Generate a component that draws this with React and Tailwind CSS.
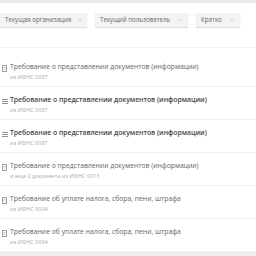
import { ChevronDown } from 'lucide-react';

const items = [
    { title: 'Требование о представлении документов (информации)', sub: 'из ИФНС 0087', unread: false },
    { title: 'Требование о представлении документов (информации)', sub: 'из ИФНС 0087', unread: true },
    { title: 'Требование о представлении документов (информации)', sub: 'из ИФНС 0087', unread: true },
    { title: 'Требование о представлении документов (информации)', sub: 'и еще 2 документа из ИФНС 0013', unread: false },
    { title: 'Требование об уплате налога, сбора, пени, штрафа', sub: 'из ИФНС 0004', unread: false },
    { title: 'Требование об уплате налога, сбора, пени, штрафа', sub: 'из ИФНС 0004', unread: false },
];

function DocIcon() {
    return (
        <svg width="5" height="7" viewBox="0 0 5 7" className="shrink-0">
            <rect x="0.5" y="0.5" width="4" height="6" fill="#fff" stroke="#a0a0a0" />
            <path d="M1.5 2.5h2M1.5 4h2" stroke="#b8b8b8" strokeWidth="0.8" />
        </svg>
    );
}

function StackIcon() {
    return (
        <svg width="6" height="6" viewBox="0 0 6 6" className="shrink-0">
            <path d="M0 1.5h6M0 3.5h6M0 5.5h6" stroke="#888" strokeWidth="0.9" />
        </svg>
    );
}

function Filter({ label, width }) {
    return (
        <button className={`flex items-center gap-[7px] shrink-0 whitespace-nowrap h-[14px] pl-[5px] bg-[#f3f3f3] shadow-[0_1px_1px_rgba(0,0,0,0.12)] text-[6.2px] leading-none text-[#666] ${width}`}>
            <span>{label}</span>
            <ChevronDown size={5} strokeWidth={2.5} className="text-[#999] shrink-0" />
        </button>
    );
}

export default function App() {
    return (
        <div className="w-[256px] h-[256px] bg-white overflow-hidden flex flex-col" style={{ fontFamily: '"Open Sans", "Noto Sans", sans-serif' }}>
            <div className="h-[3px] bg-[#ececec] shrink-0" />

            {/* Filters */}
            <div className="flex items-start gap-[8px] h-[45px] pt-[10px] border-b border-[#f0f0f0] shrink-0">
                <Filter label="Текущая организация" width="w-[87px]" />
                <Filter label="Текущий пользователь" width="w-[93px]" />
                <Filter label="Кратко" width="w-[44px]" />
            </div>

            {/* List */}
            <div className="flex flex-col pt-[6px]">
                {items.map((item, i) => (
                    <div key={i} className="flex gap-[3px] pl-[2px] h-[33px] pt-[10px] border-b border-[#efefef] shrink-0">
                        <div className="pt-[1px] w-[5px]">
                            {item.unread ? <StackIcon /> : <DocIcon />}
                        </div>
                        <div className="flex flex-col leading-none">
                            <div className={`text-[6.8px] whitespace-nowrap ${item.unread ? 'font-semibold text-[#444]' : 'text-[#666]'}`}>{item.title}</div>
                            <div className="text-[5.5px] text-[#aaa] mt-[4px]">{item.sub}</div>
                        </div>
                    </div>
                ))}
            </div>
            <div className="flex-1 bg-[#eeeeee]" />
        </div>
    );
}
